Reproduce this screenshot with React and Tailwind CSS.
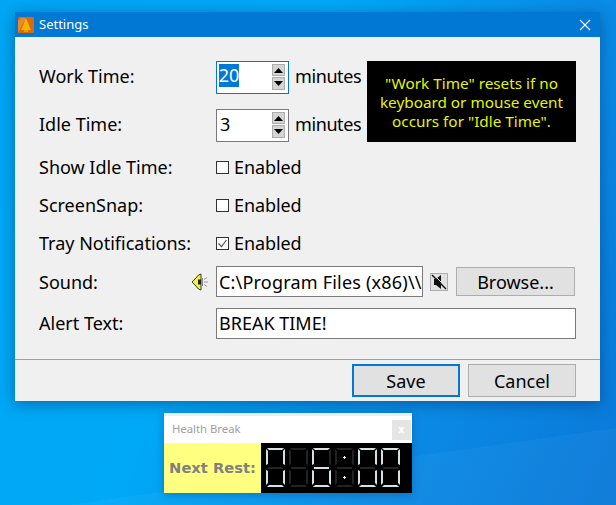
import React from "react";

const FONT = "font-['Noto_Sans','Open_Sans',sans-serif]";

function Spin() {
  return (
    <div className="ml-auto mr-[3px] mt-[2px] flex flex-col gap-px self-start">
      <div className="flex h-[12px] w-[13px] items-center justify-center border border-[#adadad] bg-[#d4d4d4]">
        <svg width="9" height="5" viewBox="0 0 9 5"><path d="M4.5 0 9 5H0z" fill="#000" /></svg>
      </div>
      <div className="flex h-[13px] w-[13px] items-center justify-center border border-[#adadad] bg-[#d4d4d4]">
        <svg width="9" height="5" viewBox="0 0 9 5"><path d="M0 0h9L4.5 5z" fill="#000" /></svg>
      </div>
    </div>
  );
}

function TimeRow({ label, value, active }) {
  return (
    <div className="flex h-[33px] items-center">
      <div className="w-[177px] pb-[3px]">{label}</div>
      <div className={`flex h-[33px] w-[73px] items-center bg-white pl-[2px] ${active ? "border border-[#0078d7]" : "border border-[#7a7a7a]"}`}>
        {active ? (
          <span className="mb-[4px] flex h-[23px] w-[20px] items-center justify-center bg-[#0078d7] pb-[1px] text-white">{value}</span>
        ) : (
          <span className="pb-[3px] pl-px leading-[23px]">{value}</span>
        )}
        <Spin />
      </div>
      <div className="ml-[6px] pb-[3px] tracking-[-0.4px]">minutes</div>
    </div>
  );
}

function CheckRow({ label, checked, className }) {
  return (
    <div className={`flex h-[24px] items-center ${className}`}>
      <div className="w-[177px]">{label}</div>
      <div className="flex h-[13px] w-[13px] items-center justify-center border border-[#333] bg-white">
        {checked && (
          <svg width="11" height="11" viewBox="0 0 11 11" fill="none">
            <path d="M1.5 5.5 4.5 8.5 9.5 2" stroke="#555" strokeWidth="1.2" />
          </svg>
        )}
      </div>
      <div className="ml-[5px] tracking-[-0.1px]">Enabled</div>
    </div>
  );
}

const SEGS = {
  0: "abcdef",
  6: "acdefg",
  x: "",
};

function Digit({ d }) {
  const on = SEGS[d];
  const c = (s) => (on.includes(s) ? "#cfe3e3" : "#232323");
  return (
    <svg width="19" height="39" viewBox="0 0 19 39" className="shrink-0">
      <path d="M1 0h17l-2 2H3z" fill={c("a")} />
      <path d="M19 1v16l-2-1V3z" fill={c("b")} />
      <path d="M19 22v15l-2-2V23z" fill={c("c")} />
      <path d="M1 39h17l-2-2H3z" fill={c("d")} />
      <path d="M0 22v15l2-2V23z" fill={c("e")} />
      <path d="M0 1v16l2-1V3z" fill={c("f")} />
      <path d="M2 19h15v2H2z" fill={c("g")} />
    </svg>
  );
}

function Colon() {
  return (
    <svg width="19" height="39" viewBox="0 0 19 39" className="shrink-0">
      <path d="M1 0h17l-2 2H3zM19 1v16l-2-1V3zM19 22v15l-2-2V23zM1 39h17l-2-2H3zM0 22v15l2-2V23zM0 1v16l2-1V3zM2 19h15v2H2z" fill="#232323" />
      <path d="M8 9h1V8h1v1h1v1h-1v1H9v-1H8zM8 29h1v-1h1v1h1v1h-1v1H9v-1H8z" fill="#e8f0f0" />
    </svg>
  );
}

function BellIcon() {
  return (
    <svg width="16" height="16" viewBox="0 0 16 16" className="shrink-0">
      <rect width="16" height="16" rx="1" fill="#d96a0a" />
      <path d="M0 16 8 1 3 1 0 4z" fill="#e88a2a" />
      <path d="M8 2c1 0 1 2 2 4l2 5 1 2H3l1-2 2-5c1-2 1-4 2-4z" fill="#f5b400" />
      <path d="M6 13h4v2H6z" fill="#e8a000" />
    </svg>
  );
}

function SpeakerIcon() {
  return (
    <svg width="18" height="18" viewBox="0 0 18 18" className="shrink-0">
      <path d="M1 9 4 6 7.5 2 10 1V17L7.5 16 4 12z" fill="#f4f040" stroke="#3a3a2a" strokeWidth="1" />
      <path d="M7 6.5h3v5H7z" fill="#222" />
      <path d="M11.5 5v8" stroke="#8a8a8a" strokeWidth="1" />
      <path d="M13 9h4M13 6.5l3-2M13 11.5l3 2" stroke="#9a9a9a" strokeWidth="1" />
    </svg>
  );
}

function MuteIcon() {
  return (
    <svg width="16" height="16" viewBox="0 0 16 16">
      <path d="M3 5h2l5-4v14l-5-4H3z" fill="#111" />
      <path d="M1 1 15 15" stroke="#111" strokeWidth="1.4" />
      <path d="M2 0 16 14" stroke="#e1e1e1" strokeWidth="1" />
    </svg>
  );
}

export default function App() {
  return (
    <div className={`relative h-[505px] w-[616px] overflow-hidden bg-[linear-gradient(172deg,transparent_0,transparent_87%,rgba(255,255,255,0.03)_87%),linear-gradient(115deg,#00a6f4_0%,#00a9f7_40%,#0a8ce6_70%,#0a78d8_100%)] ${FONT}`}>
      {/* Settings window */}
      <div className="absolute left-[15px] top-[12px] flex h-[389px] w-[585px] flex-col bg-[#f0f0f0] text-[18px] leading-[24px] text-black shadow-[0_3px_14px_rgba(0,40,90,0.45)]">
        <div className="flex h-[25px] items-center bg-[#0078d4] pl-[3px] text-[13px] text-white">
          <BellIcon />
          <span className="ml-[5px] pb-[2px]">Settings</span>
          <svg width="12" height="12" viewBox="0 0 12 12" className="ml-auto mr-[9px]">
            <path d="M1 1 11 11M11 1 1 11" stroke="#fff" strokeWidth="1.1" />
          </svg>
        </div>

        <div className="flex flex-1 flex-col pl-[24px] pr-[24px] pt-[24px]">
          <div className="flex">
            <div className="flex w-[328px] shrink-0 flex-col gap-[15px]">
              <TimeRow label="Work Time:" value="20" active />
              <TimeRow label="Idle Time:" value="3" />
            </div>
            <div className="flex h-[81px] w-[209px] items-center justify-center bg-black pt-[2px] text-center text-[15.3px] leading-[19px] text-[#e4f500]">
              <p>"Work Time" resets if no<br />keyboard or mouse event<br />occurs for "Idle Time".</p>
            </div>
          </div>

          <CheckRow label="Show Idle Time:" className="mt-[13px]" />
          <CheckRow label="ScreenSnap:" className="mt-[14px]" />
          <CheckRow label="Tray Notifications:" checked className="mt-[14px]" />

          <div className="mt-[11px] flex h-[31px] items-center">
            <div className="w-[152px]">Sound:</div>
            <SpeakerIcon />
            <div className="ml-[7px] flex h-[31px] w-[207px] items-center overflow-hidden whitespace-nowrap border border-[#7a7a7a] bg-white pl-[2px] tracking-[0.2px]">
              C:\Program Files (x86)\\V
            </div>
            <div className="ml-[7px] flex h-[18px] w-[18px] items-center justify-center border border-[#adadad] bg-[#e1e1e1]">
              <MuteIcon />
            </div>
            <div className="ml-[8px] flex h-[29px] w-[119px] items-center justify-center border border-[#adadad] bg-[#e1e1e1]">
              Browse...
            </div>
          </div>

          <div className="mt-[11px] flex h-[31px] items-center">
            <div className="w-[177px] pb-[2px]">Alert Text:</div>
            <div className="flex h-[31px] w-[360px] items-center border border-[#7a7a7a] bg-white pb-[1px] pl-[2px]">
              BREAK TIME!
            </div>
          </div>
        </div>

        <div className="h-[42px] border-t border-[#a0a0a0] pr-[24px] pt-[4px]">
          <div className="flex justify-end gap-[8px]">
            <div className="flex h-[33px] w-[108px] items-center justify-center border-2 border-[#0078d7] bg-[#e1e1e1]">Save</div>
            <div className="flex h-[33px] w-[108px] items-center justify-center border border-[#adadad] bg-[#e1e1e1]">Cancel</div>
          </div>
        </div>
      </div>

      {/* Health Break window */}
      <div className="absolute left-[164px] top-[413px] flex h-[80px] w-[248px] flex-col bg-white shadow-[0_2px_8px_rgba(0,40,90,0.3)]">
        <div className="flex h-[30px] items-center border-t-[3px] border-[#eeeeee] pl-[8px] pr-px text-[11.3px] text-[#a0a0a0]">
          <span>Health Break</span>
          <div className="ml-auto flex h-[20px] w-[19px] items-center justify-center bg-[#e5e5e5] text-[10px] font-bold text-white">x</div>
        </div>
        <div className="flex flex-1">
          <div className="flex w-[97px] items-center justify-center bg-[#ffff80] font-['DejaVu_Sans',sans-serif] text-[14.7px] font-bold text-[#808080]">
            Next Rest:
          </div>
          <div className="flex flex-1 items-start gap-[4px] bg-black pl-[5px] pt-[5px]">
            <Digit d="0" />
            <Digit d="x" />
            <Digit d="6" />
            <Colon />
            <Digit d="0" />
            <Digit d="0" />
          </div>
        </div>
      </div>
    </div>
  );
}
